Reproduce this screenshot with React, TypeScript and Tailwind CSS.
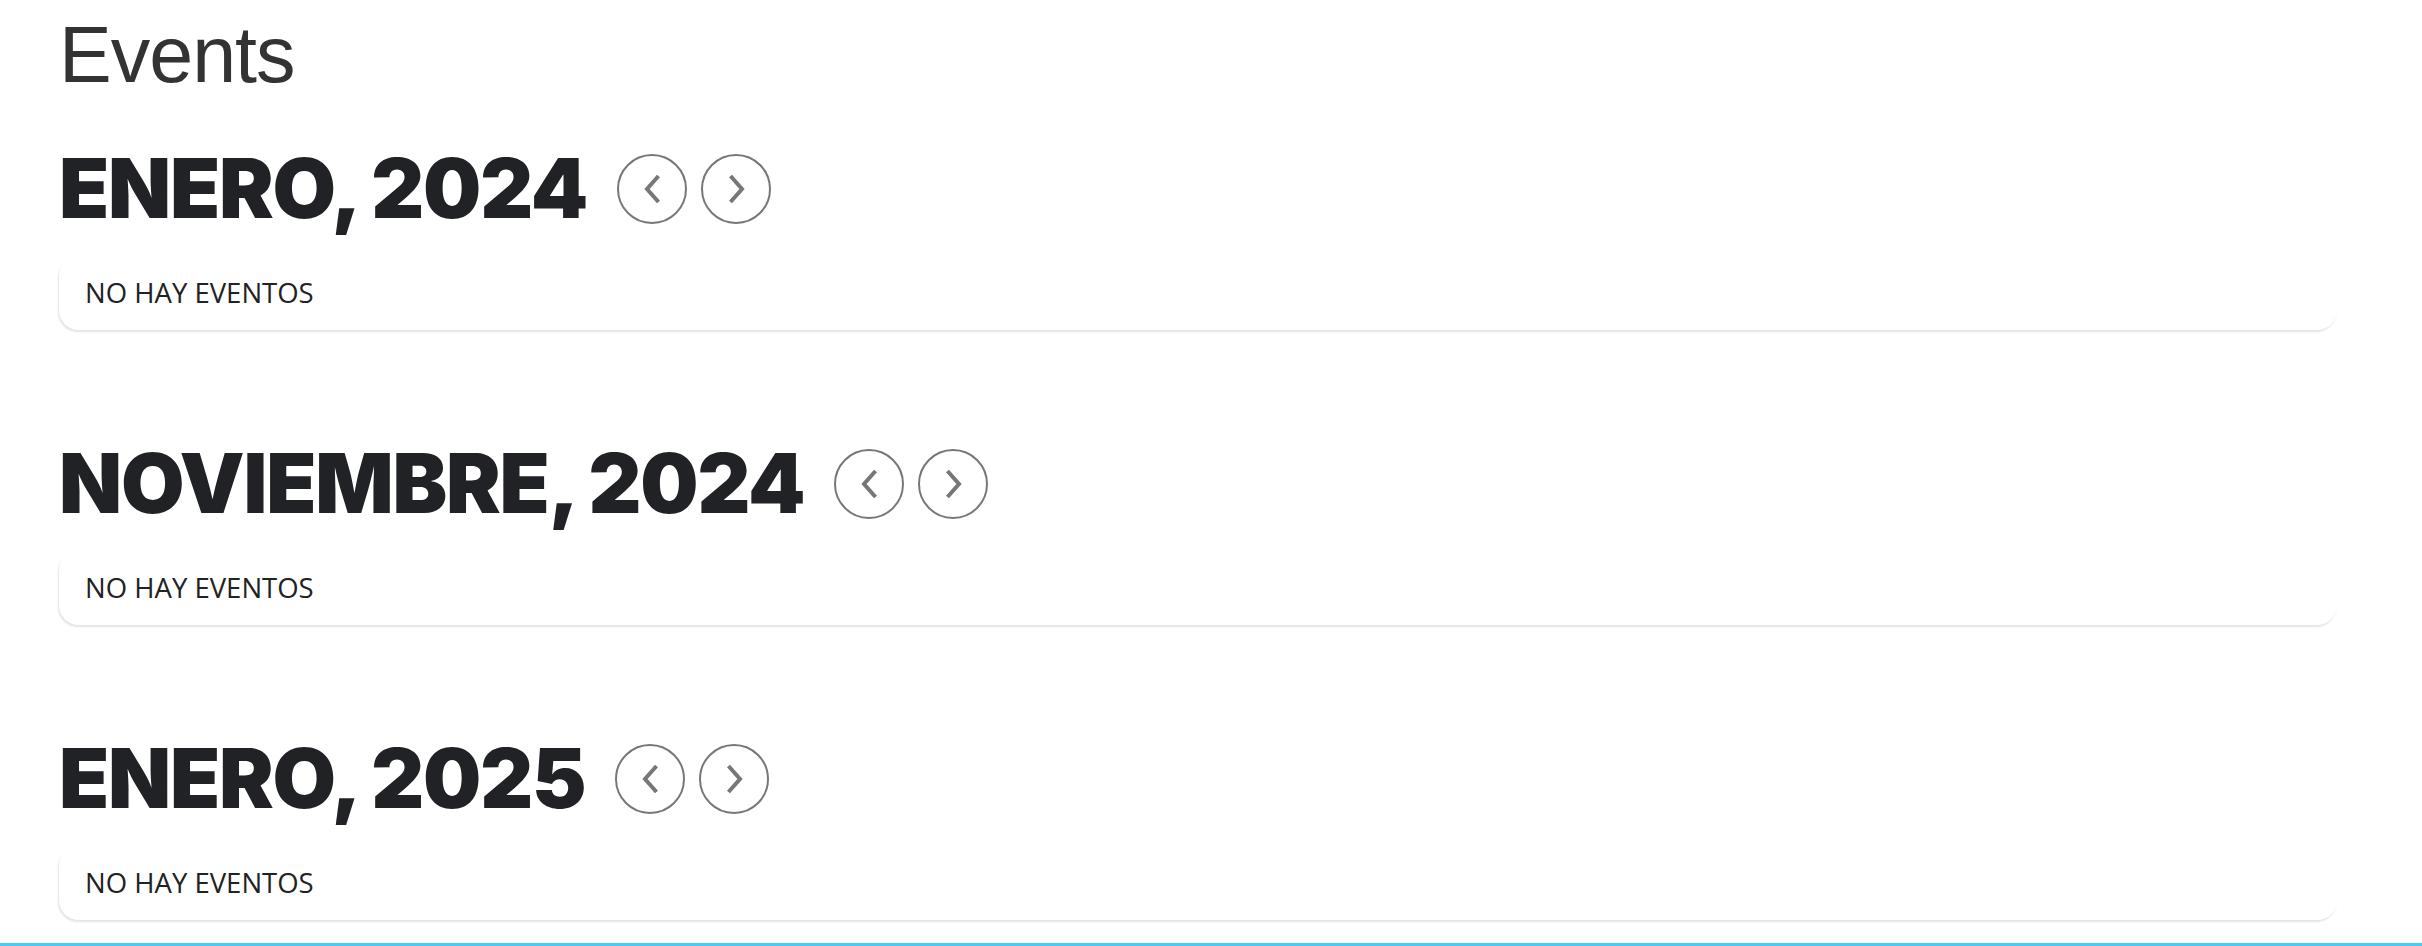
import { Fragment } from 'react';

const months = [
    { label: 'ENERO, 2024' },
    { label: 'NOVIEMBRE, 2024' },
    { label: 'ENERO, 2025' },
];

function NavButton({ dir }: { dir: 'prev' | 'next' }) {
    return (
        <button className="w-[70px] h-[70px] rounded-full border-2 border-[#777] flex items-center justify-center shrink-0">
            <svg width="17" height="30" viewBox="0 0 17 30" fill="none" stroke="#777" strokeWidth="4">
                {dir === 'prev'
                    ? <path d="M14.5 2 3 15l11.5 13" />
                    : <path d="M2.5 2 14 15 2.5 28" />}
            </svg>
        </button>
    );
}

export default function App() {
    return (
        <div className="min-h-[946px] bg-white relative overflow-hidden">
            <div className="pl-[59px] pr-[85px] pt-[15px]">
                <h1 className="font-['Liberation_Sans',Arial,sans-serif] text-[79px] leading-none text-[#333] tracking-[-1px]">
                    Events
                </h1>

                <div className="mt-[54px]">
                    {months.map((m, i) => (
                        <Fragment key={m.label}>
                            <section className={i > 0 ? 'mt-[113px]' : ''}>
                                <div className="flex items-center">
                                    <h2 className="font-['Inter',sans-serif] font-black text-[82px] leading-none text-[#212226] tracking-[-1.2px]">
                                        {m.label}
                                    </h2>
                                    <div className="flex items-center gap-[14px] ml-[30px]">
                                        <NavButton dir="prev" />
                                        <NavButton dir="next" />
                                    </div>
                                </div>
                                <div className="mt-[26px] h-[74px] rounded-[20px] bg-white shadow-[-1px_2px_2px_rgba(0,0,0,0.11)] flex items-center pl-[26px]">
                                    <span className="font-['Open_Sans',sans-serif] text-[27.5px] text-[#222]">NO HAY EVENTOS</span>
                                </div>
                            </section>
                        </Fragment>
                    ))}
                </div>
            </div>
            <div className="absolute left-0 right-0 top-[943px] h-[3px] bg-[#4fc8f5]" />
        </div>
    );
}
